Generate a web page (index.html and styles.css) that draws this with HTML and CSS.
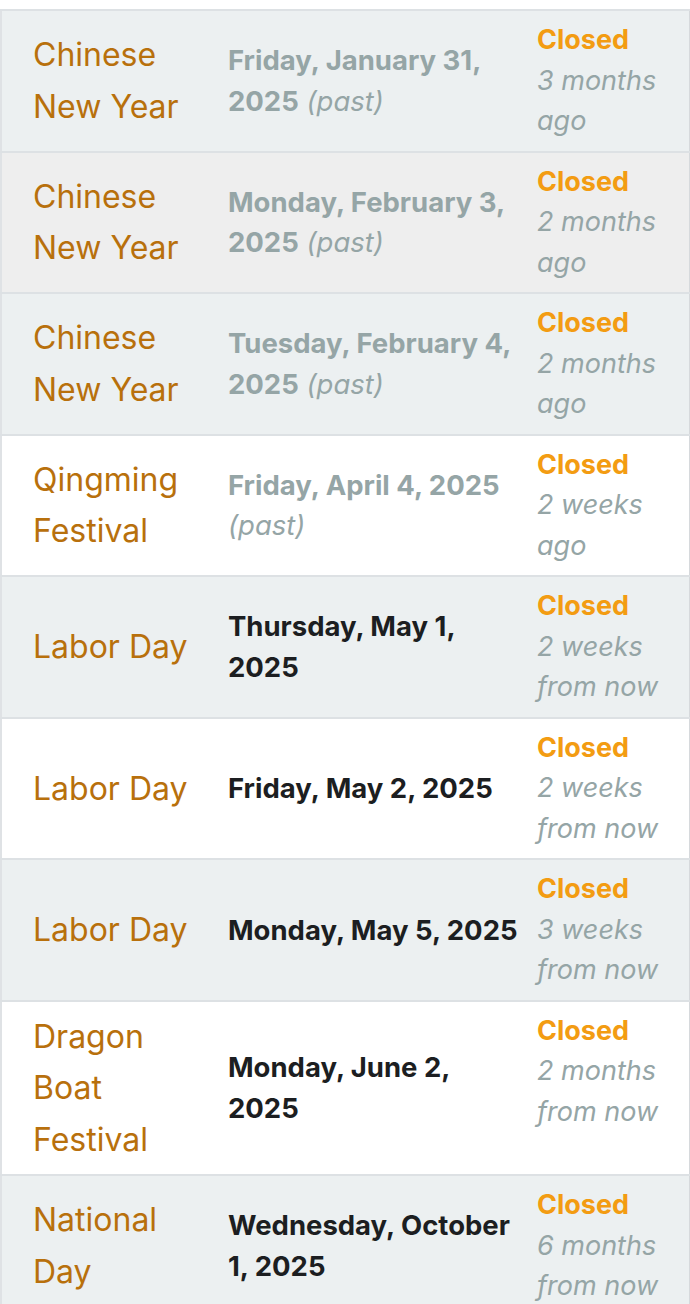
FILE: index.html
```html
<!DOCTYPE html>
<html lang="en">
<head>
<meta charset="utf-8">
<title>Holidays</title>
<link rel="stylesheet" href="styles.css">
</head>
<body>
<div class="wrap">
<table class="holidays">
  <tbody>
    <tr class="stripe">
      <td class="name">Chinese New Year</td>
      <td class="date past"><strong>Friday, January 31, 2025</strong> <em>(past)</em></td>
      <td class="status"><span class="closed">Closed</span><br><em>3 months ago</em></td>
    </tr>
    <tr class="hover">
      <td class="name">Chinese New Year</td>
      <td class="date past"><strong>Monday, February 3, 2025</strong> <em>(past)</em></td>
      <td class="status"><span class="closed">Closed</span><br><em>2 months ago</em></td>
    </tr>
    <tr class="stripe">
      <td class="name">Chinese New Year</td>
      <td class="date past"><strong>Tuesday, February 4, 2025</strong> <em>(past)</em></td>
      <td class="status"><span class="closed">Closed</span><br><em>2 months ago</em></td>
    </tr>
    <tr>
      <td class="name">Qingming Festival</td>
      <td class="date past"><strong>Friday, April 4, 2025</strong> <em>(past)</em></td>
      <td class="status"><span class="closed">Closed</span><br><em>2 weeks ago</em></td>
    </tr>
    <tr class="stripe">
      <td class="name">Labor Day</td>
      <td class="date"><strong>Thursday, May 1, 2025</strong></td>
      <td class="status"><span class="closed">Closed</span><br><em>2 weeks from now</em></td>
    </tr>
    <tr>
      <td class="name">Labor Day</td>
      <td class="date"><strong>Friday, May 2, 2025</strong></td>
      <td class="status"><span class="closed">Closed</span><br><em>2 weeks from now</em></td>
    </tr>
    <tr class="stripe">
      <td class="name">Labor Day</td>
      <td class="date"><strong>Monday, May 5, 2025</strong></td>
      <td class="status"><span class="closed">Closed</span><br><em>3 weeks from now</em></td>
    </tr>
    <tr>
      <td class="name">Dragon Boat Festival</td>
      <td class="date"><strong>Monday, June 2, 2025</strong></td>
      <td class="status"><span class="closed">Closed</span><br><em>2 months from now</em></td>
    </tr>
    <tr class="stripe">
      <td class="name">National Day</td>
      <td class="date"><strong>Wednesday, October 1, 2025</strong></td>
      <td class="status"><span class="closed">Closed</span><br><em>6 months from now</em></td>
    </tr>
  </tbody>
</table>
</div>
</body>
</html>
```

FILE: styles.css
```css
html, body {
  margin: 0;
  padding: 0;
  background: #ffffff;
}

body {
  font-family: Inter, "Liberation Sans", sans-serif;
  font-size: 27px;
  line-height: 40.5px;
  color: #1c1e21;
}

.wrap {
  padding-top: 9px;
}

.holidays {
  width: 690px;
  border-collapse: collapse;
  table-layout: fixed;
  border: 1px solid #d6d9dc;
  border-left: 2px solid #dfe2e5;
}

.holidays tr {
  border-top: 2px solid #dde1e4;
  background: #ffffff;
}

.holidays tr.stripe {
  background: #ecf0f1;
}

.holidays tr.hover {
  background: #eeeeee;
}

.holidays td {
  padding: 9px 0 9px 13px;
  vertical-align: middle;
}

.name {
  width: 182px;
  padding-left: 31px !important;
  font-size: 32px;
  line-height: 51.5px;
  color: #b8700c;
}

.date {
  width: 292px;
  padding-right: 4px !important;
  font-size: 27.5px;
}

.date strong {
  font-weight: 700;
}

.date.past {
  color: #95a5a6;
}

.date em,
.status em {
  font-weight: 400;
  font-style: italic;
  color: #95a5a6;
}

.status {
  vertical-align: top !important;
}

.closed {
  font-weight: 700;
  color: #f39c12;
}
```
